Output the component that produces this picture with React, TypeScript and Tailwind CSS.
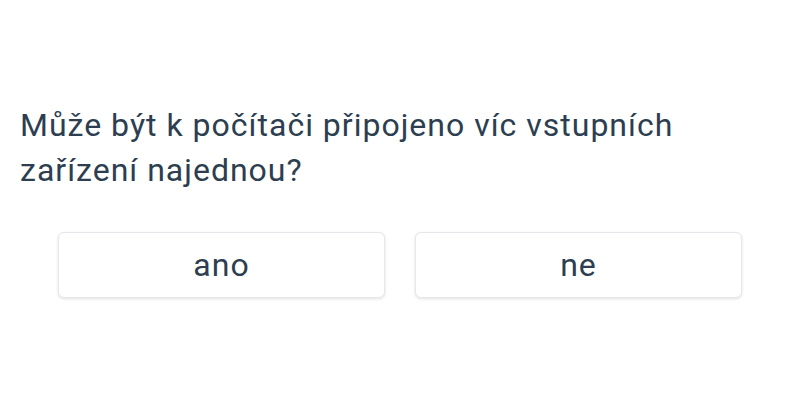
import React from 'react';

const ANSWERS = ['ano', 'ne'];

export default function App() {
  return (
    <div
      className="min-h-[400px] w-[800px] bg-white flex flex-col justify-center text-[#2c3e50] tracking-[1px]"
      style={{ fontFamily: 'Roboto, "Noto Sans", sans-serif' }}
    >
      <h1 className="px-5 text-[32px] leading-[45px] font-normal">
        Může být k počítači připojeno víc vstupních zařízení najednou?
      </h1>

      <div className="mt-[39px] grid grid-cols-2 gap-[30px] px-[58px]">
        {ANSWERS.map((a) => (
          <button
            key={a}
            className="h-[66px] rounded-md border border-gray-200 bg-white text-[32px] shadow-[0_1px_3px_rgba(0,0,0,0.12)]"
          >
            {a}
          </button>
        ))}
      </div>
    </div>
  );
}
